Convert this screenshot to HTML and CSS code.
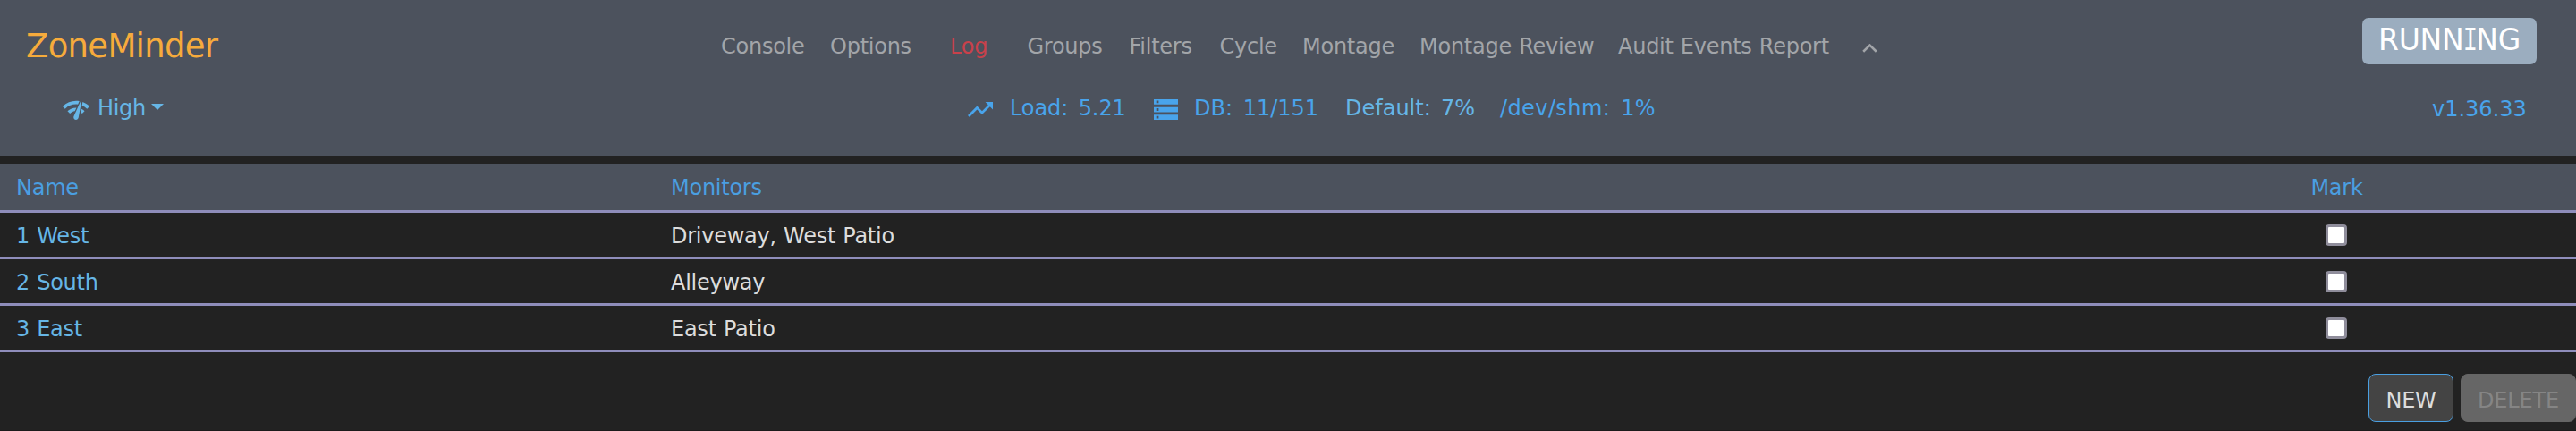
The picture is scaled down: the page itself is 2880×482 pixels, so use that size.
FILE: index.html
```html
<!DOCTYPE html>
<html lang="en">
<head>
<meta charset="utf-8">
<title>ZoneMinder - Groups</title>
<link rel="stylesheet" href="styles.css">
</head>
<body>
<header class="header">
  <div class="navbar">
    <a class="brand">ZoneMinder</a>
    <nav class="menu">
      <a class="console">Console</a>
      <a class="options">Options</a>
      <a class="log">Log</a>
      <a class="groups">Groups</a>
      <a class="filters">Filters</a>
      <a class="cycle">Cycle</a>
      <a class="montage">Montage</a>
      <a class="review">Montage Review</a>
      <a class="audit">Audit Events Report</a>
      <svg class="chevron" viewBox="0 0 17 10"><path d="M1.2 8.8 8.5 1.6l7.3 7.2" fill="none" stroke="currentColor" stroke-width="2.6"/></svg>
    </nav>
    <span class="badge">RUNN<span class="slab">I</span>NG</span>
  </div>
  <div class="status">
    <a class="bandwidth">
      <svg class="icon-network" viewBox="1 4 22 16"><path fill="currentColor" d="M15.900 5c-.17 0-.32.09-.41.23l-.07.15-5.180 11.650c-.16.29-.26.61-.26.96 0 1.110.9 2.010 2.010 2.010.96 0 1.770-.68 1.960-1.590l.01-.03L16.400 5.500c0-.28-.22-.5-.5-.5zM1 9l2 2c2.880-2.880 6.790-4.080 10.530-3.620l1.190-2.680C9.890 3.840 4.740 5.270 1 9zm20 2l2-2c-1.640-1.640-3.550-2.820-5.590-3.570l-.53 2.820c1.500.62 2.900 1.530 4.120 2.750zm-4 4l2-2c-.8-.8-1.700-1.420-2.660-1.890l-.55 2.920c.42.27.83.59 1.210.97zM5 13l2 2c1.130-1.130 2.560-1.790 4.030-2l1.280-2.880c-2.630-.08-5.300.87-7.310 2.880z"/></svg>
      <span class="level">High</span>
      <span class="caret"></span>
    </a>
    <div class="stats">
      <svg class="icon-trend" viewBox="2 6 20 12"><path d="M16 6l2.290 2.290-4.880 4.880-4-4L2 16.590 3.410 18l6-6 4 4 6.300-6.290L22 12V6z" fill="currentColor"/></svg>
      <span class="load">Load: 5.21</span>
      <svg class="icon-storage" viewBox="2 4 20 16" preserveAspectRatio="none"><path d="M2 20h20v-4H2v4zm2-3h2v2H4v-2zM2 4v4h20V4H2zm4 3H4V5h2v2zm-4 7h20v-4H2v4zm2-3h2v2H4v-2z" fill="currentColor"/></svg>
      <span class="db">DB: 11/151</span>
      <span class="default">Default: 7%</span>
      <span class="shm">/dev/shm: 1%</span>
    </div>
    <a class="version">v1.36.33</a>
  </div>
</header>
<table class="groups-table">
  <thead>
    <tr><th class="col-name">Name</th><th class="col-monitors">Monitors</th><th class="col-mark">Mark</th></tr>
  </thead>
  <tbody>
    <tr><td class="name">1 West</td><td>Driveway, West Patio</td><td class="mark"><span class="checkbox"></span></td></tr>
    <tr><td class="name">2 South</td><td>Alleyway</td><td class="mark"><span class="checkbox"></span></td></tr>
    <tr><td class="name">3 East</td><td>East Patio</td><td class="mark"><span class="checkbox"></span></td></tr>
  </tbody>
</table>
<div class="actions">
  <button class="btn new">NEW</button>
  <button class="btn delete" disabled>DELETE</button>
</div>
</body>
</html>
```
FILE: styles.css
```css
* { box-sizing: border-box; }

html { height: 482px; overflow: hidden; background: #222; }

body {
  margin: 0;
  height: 482px;
  overflow: hidden;
  background: #222;
  color: #ddd;
  font: 24px/36px "DejaVu Sans", Verdana, sans-serif;
  letter-spacing: -0.25px;
  word-spacing: 0.8px;
  border-bottom: 1px solid #1b1b1b;
}

svg { display: block; flex: none; }

.header {
  height: 175px;
  margin-bottom: 8px;
  background: #4c525d;
}

.navbar { display: flex; height: 98px; align-items: flex-start; }
.navbar a, .status span, .status a { white-space: nowrap; }

.brand {
  width: 776px;
  padding: 24px 0 0 29px;
  font-size: 37px;
  line-height: 56px;
  letter-spacing: -0.7px;
  color: #f6ab3c;
}

.menu {
  display: flex;
  width: 1865px;
  padding: 34px 0 0 29px;
  color: #a2a5a9;
}
.console { width: 122px; padding-left: 1px; }
.options { width: 134px; padding-left: 1px; }
.log { width: 86.500px; padding-left: 1px; color: #c9414b; }
.groups { width: 114px; padding-left: 1px; }
.filters { width: 101px; padding-left: 1px; }
.cycle { width: 92.500px; padding-left: 1px; }
.montage { width: 131px; padding-left: 1px; }
.review { width: 223px; padding-left: 1px; }
.audit { width: 273px; }
.chevron { width: 17px; height: 10px; margin-top: 15px; }

.badge {
  width: 195px;
  height: 52px;
  margin-top: 20px;
  border-radius: 7px;
  background: #9badbf;
  color: #fff;
  font-size: 33px;
  line-height: 49px;
  letter-spacing: -0.2px;
  text-align: center;
}
.slab {
  display: inline-block;
  margin: 0 -3px;
  font-family: "DejaVu Sans Mono", monospace;
  transform: scaleX(0.82);
}

.status { display: flex; height: 77px; color: #49a4eb; }
.bandwidth { display: flex; width: 1082px; padding: 5px 0 0 70px; color: #66b6e6; }
.icon-network { width: 30px; height: 22px; margin-top: 9px; }
.level { width: 61px; margin-left: 9px; letter-spacing: -0.300px; }
.caret {
  height: 7px;
  margin: 13px 0 0 -1px;
  border: 7px solid transparent;
  border-top-color: currentColor;
  border-bottom: 0;
}

.stats { display: flex; width: 1637px; padding-top: 5px; }
.icon-trend { width: 28px; height: 17px; margin: 11px 18px 0 0; }
.load { width: 162px; padding-left: 1px; letter-spacing: -0.1px; word-spacing: 4px; }
.icon-storage { width: 27px; height: 23px; margin: 8px 17px 0 0; }
.db { width: 169px; padding-left: 1px; letter-spacing: 0; word-spacing: 4px; }
.default { width: 174px; padding-left: 1px; color: #66b6e6; letter-spacing: 0; word-spacing: 3.500px; }
.shm { letter-spacing: 0.400px; word-spacing: 4px; }
.version { padding-top: 6px; letter-spacing: 0; }

.groups-table {
  width: 100%;
  border-collapse: separate;
  border-spacing: 0;
  table-layout: fixed;
}
.groups-table th, .groups-table td {
  height: 52px;
  padding: 2px 0 0 18px;
  border-bottom: 3px solid #8f8dbb;
  text-align: left;
  font-weight: 400;
}
.groups-table th { height: 55px; background: #4c525d; color: #4a9fe1; }
.groups-table .col-name { width: 732px; }
.groups-table .col-mark { width: 536px; }
.groups-table .col-mark { padding: 2px 0 0 1px; text-align: center; }
.groups-table .mark { padding: 1px 0 0; }
.groups-table .name { color: #66b6e6; }
.checkbox {
  display: block;
  width: 24px;
  height: 24px;
  margin: 0 auto;
  border: 3px solid #8f8d9b;
  border-radius: 4px;
  background: #fff;
}

.actions { display: flex; justify-content: flex-end; gap: 8px; padding-top: 24px; }
.btn {
  height: 54px;
  padding: 6px 0 0;
  border: 1px solid #4a9fe1;
  border-radius: 8px;
  background: #444;
  color: #ddd;
  font: inherit;
  letter-spacing: -0.2px;
}
.new { width: 95px; }
.delete { width: 129px; border-color: #666; background: #666; color: #858585; }
```
